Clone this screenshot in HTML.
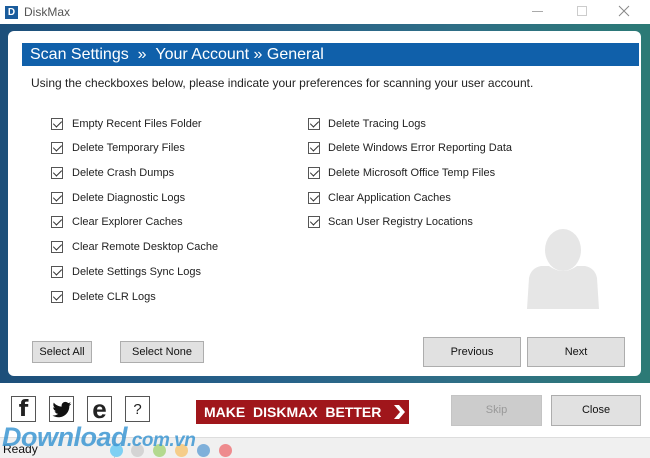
<!DOCTYPE html>
<html><head><style>
*{margin:0;padding:0;box-sizing:border-box}
body{width:650px;height:458px;overflow:hidden;position:relative;font-family:"Liberation Sans",sans-serif;background:#fff;font-size:11px;color:#222}
.abs{position:absolute}
.bg{left:0;top:24px;width:650px;height:359px;background:linear-gradient(90deg,#1d4f7a 0%,#27618a 40%,#2f6e86 70%,#2c7a76 100%)}
.panel{left:8px;top:31px;width:633px;height:345px;background:#fff;border-radius:6px}
.hdr{left:22px;top:43px;width:617px;height:23px;background:#1060aa;color:#fff;font-size:16px;padding-left:8px;line-height:23px}
.cb{position:absolute;width:12px;height:12px;border:1px solid #555;background:#fff}
.cb:after{content:"";position:absolute;left:3px;top:0px;width:4px;height:7px;border:solid #333;border-width:0 1.3px 1.3px 0;transform:rotate(45deg)}
.lbl{position:absolute;font-size:11px;color:#222;white-space:nowrap}
.btn{position:absolute;background:#e1e1e1;border:1px solid #adadad;text-align:center;font-size:11px;color:#111}
.sq{position:absolute;top:396px;width:25px;height:26px;border:1px solid #555;background:#fff;text-align:center;font-weight:bold;font-size:22px;line-height:26px}
.dot{position:absolute;top:444px;width:13px;height:13px;border-radius:50%}
</style></head><body>
<div class="abs" style="left:5px;top:6px;width:13px;height:13px;background:#1a5c9c;color:#fff;font-size:10px;font-weight:bold;line-height:13px;text-align:center">D</div>
<div class="abs" style="left:24px;top:5px;font-size:12px;color:#555">DiskMax</div>
<div class="abs" style="left:532px;top:11px;width:11px;height:1px;background:#aaa"></div>
<div class="abs" style="left:577px;top:6px;width:10px;height:10px;border:1px solid #ccc"></div>
<svg class="abs" style="left:618px;top:5px" width="12" height="12"><path d="M1 1L11 11M11 1L1 11" stroke="#888" stroke-width="1"/></svg>
<div class="abs bg"></div>
<div class="abs panel"></div>
<div class="abs hdr">Scan Settings &nbsp;» &nbsp;Your Account » General</div>
<div class="lbl" style="left:31px;top:76px;font-size:12px">Using the checkboxes below, please indicate your preferences for scanning your user account.</div>

<div class="cb" style="left:51px;top:118px"></div><div class="lbl" style="left:72px;top:118px">Empty Recent Files Folder</div>
<div class="cb" style="left:51px;top:142px"></div><div class="lbl" style="left:72px;top:142px">Delete Temporary Files</div>
<div class="cb" style="left:51px;top:167px"></div><div class="lbl" style="left:72px;top:167px">Delete Crash Dumps</div>
<div class="cb" style="left:51px;top:192px"></div><div class="lbl" style="left:72px;top:192px">Delete Diagnostic Logs</div>
<div class="cb" style="left:51px;top:216px"></div><div class="lbl" style="left:72px;top:216px">Clear Explorer Caches</div>
<div class="cb" style="left:51px;top:241px"></div><div class="lbl" style="left:72px;top:241px">Clear Remote Desktop Cache</div>
<div class="cb" style="left:51px;top:266px"></div><div class="lbl" style="left:72px;top:266px">Delete Settings Sync Logs</div>
<div class="cb" style="left:51px;top:291px"></div><div class="lbl" style="left:72px;top:291px">Delete CLR Logs</div>

<div class="cb" style="left:308px;top:118px"></div><div class="lbl" style="left:328px;top:118px">Delete Tracing Logs</div>
<div class="cb" style="left:308px;top:142px"></div><div class="lbl" style="left:328px;top:142px">Delete Windows Error Reporting Data</div>
<div class="cb" style="left:308px;top:167px"></div><div class="lbl" style="left:328px;top:167px">Delete Microsoft Office Temp Files</div>
<div class="cb" style="left:308px;top:192px"></div><div class="lbl" style="left:328px;top:192px">Clear Application Caches</div>
<div class="cb" style="left:308px;top:216px"></div><div class="lbl" style="left:328px;top:216px">Scan User Registry Locations</div>

<svg class="abs" style="left:527px;top:228px" width="73" height="82" viewBox="0 0 73 82">
<ellipse cx="36" cy="22" rx="18" ry="21" fill="#e6e6e6"/>
<path d="M0 81 L2 50 Q4 40 14 38 L22 38 Q36 48 50 38 L58 38 Q68 40 70 50 L72 81 Z" fill="#e6e6e6"/>
</svg>

<div class="btn" style="left:32px;top:341px;width:60px;height:22px;line-height:20px">Select All</div>
<div class="btn" style="left:120px;top:341px;width:84px;height:22px;line-height:20px">Select None</div>
<div class="btn" style="left:423px;top:337px;width:98px;height:30px;line-height:28px">Previous</div>
<div class="btn" style="left:527px;top:337px;width:98px;height:30px;line-height:28px">Next</div>

<div class="sq" style="left:11px;font-family:'DejaVu Sans',sans-serif">f</div>
<div class="sq" style="left:49px"><svg width="20" height="18" viewBox="0 0 24 20" style="margin-top:4px"><path d="M23 2.5c-.8.4-1.7.6-2.6.7.9-.6 1.6-1.4 2-2.5-.9.5-1.9.9-2.9 1.1C18.6.9 17.4.3 16.1.3c-2.5 0-4.6 2-4.6 4.6 0 .4 0 .7.1 1C7.8 5.8 4.4 4 2.2 1.2c-.4.7-.6 1.5-.6 2.3 0 1.6.8 3 2 3.8-.8 0-1.5-.2-2.1-.6v.1c0 2.2 1.6 4.1 3.7 4.5-.4.1-.8.2-1.2.2-.3 0-.6 0-.9-.1.6 1.8 2.3 3.2 4.3 3.2-1.6 1.2-3.6 2-5.7 2H.6c2 1.3 4.5 2.1 7.1 2.1 8.5 0 13.1-7 13.1-13.1v-.6c.9-.6 1.7-1.4 2.2-2.3z" fill="#111"/></svg></div>
<div class="sq" style="left:87px;font-size:26px;line-height:24px">e</div>
<div class="sq" style="left:125px;font-weight:normal;font-size:15px">?</div>

<div class="abs" style="left:196px;top:400px;width:213px;height:24px;background:#a0161b;color:#fff;font-weight:bold;font-size:14px;line-height:24px;padding-left:8px;white-space:nowrap">MAKE &nbsp;DISKMAX &nbsp;BETTER</div>
<svg class="abs" style="left:392px;top:404px" width="14" height="16"><path d="M2 1L7 1L13 8L7 15L2 15L8 8Z" fill="#fff"/></svg>

<div class="btn" style="left:451px;top:395px;width:91px;height:31px;line-height:29px;color:#999;background:#ccc;border-color:#c4c4c4">Skip</div>
<div class="btn" style="left:551px;top:395px;width:90px;height:31px;line-height:29px">Close</div>

<div class="abs" style="left:0;top:437px;width:650px;height:21px;background:#f0f0f0;border-top:1px solid #ddd"></div>
<div class="abs" style="left:3px;top:442px;font-size:12px;color:#111">Ready</div>
<div class="abs" style="left:114px;top:438px;width:1px;height:20px;background:#ccc"></div>
<div class="dot" style="left:110px;background:#7fd0f3"></div>
<div class="dot" style="left:131px;background:#d4d4d4"></div>
<div class="dot" style="left:153px;background:#b3d98f"></div>
<div class="dot" style="left:175px;background:#f5cd8a"></div>
<div class="dot" style="left:197px;background:#7fb0da"></div>
<div class="dot" style="left:219px;background:#ee8b8e"></div>

<div class="abs" style="left:2px;top:424px;font-size:27px;font-weight:bold;font-style:italic;color:rgba(60,150,210,0.85);letter-spacing:-0.5px;line-height:27px">Download<span style="font-size:19px">.com.vn</span></div>
</body></html>
